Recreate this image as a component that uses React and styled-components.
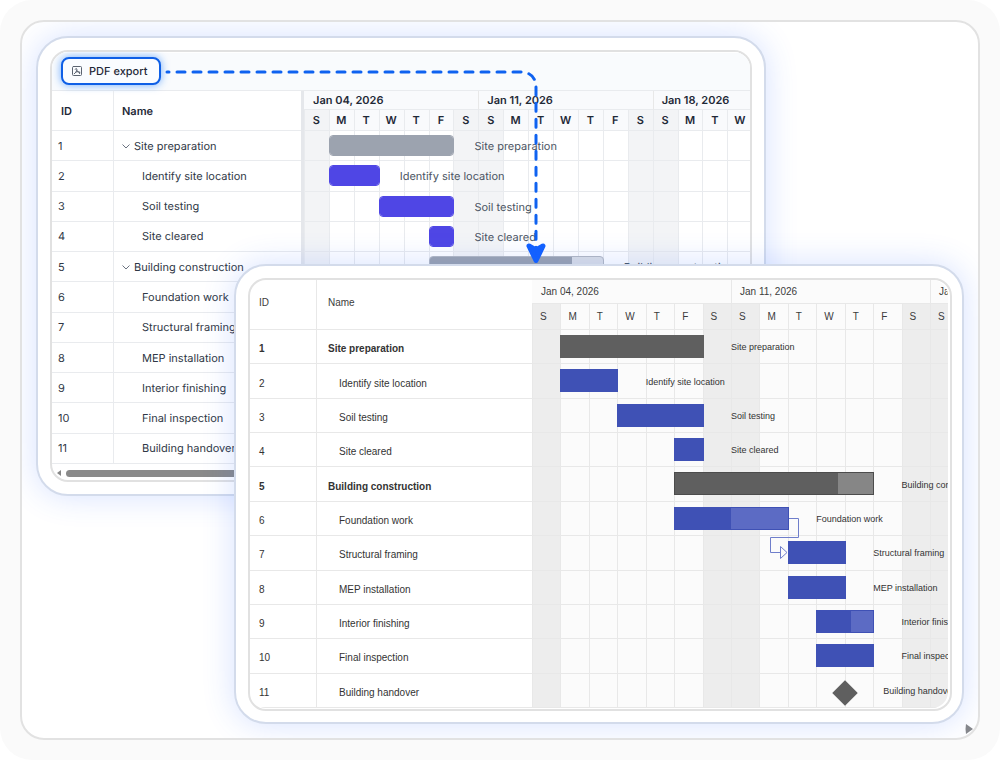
import React from 'react';
import styled, { createGlobalStyle, css } from 'styled-components';

const GlobalStyle = createGlobalStyle`
    * {
        box-sizing: border-box;
    }

    body {
        margin: 0;
        background: #ffffff;
    }
`;

const tasks = [
    { id: 1, name: 'Site preparation', group: true, start: 1, end: 6 },
    { id: 2, name: 'Identify site location', start: 1, end: 3 },
    { id: 3, name: 'Soil testing', start: 3, end: 6 },
    { id: 4, name: 'Site cleared', start: 5, end: 6 },
    { id: 5, name: 'Building construction', group: true, start: 5, end: 12, progress: 82 },
    { id: 6, name: 'Foundation work', start: 5, end: 9, progress: 50 },
    { id: 7, name: 'Structural framing', start: 9, end: 11 },
    { id: 8, name: 'MEP installation', start: 9, end: 11 },
    { id: 9, name: 'Interior finishing', start: 10, end: 12, progress: 60 },
    { id: 10, name: 'Final inspection', start: 10, end: 12 },
    { id: 11, name: 'Building handover', milestone: true, start: 11, end: 11 },
];

const weeks = ['Jan 04, 2026', 'Jan 11, 2026', 'Jan 18, 2026'];
const days = weeks.flatMap(() => ['S', 'M', 'T', 'W', 'T', 'F', 'S']);
const isWeekend = (index) => index % 7 === 0 || index % 7 === 6;

// The on-screen chart and the exported document share markup and differ only here.
const appTheme = {
    font: '"Inter", sans-serif',
    rendering: 'geometricPrecision',
    textSize: 11,
    labelSize: 11,
    headWeight: 600,
    groupWeight: 400,
    text: '#303846',
    headText: '#1f2937',
    label: '#4b5563',
    line: '#e9ebee',
    headBg: '#f9fafc',
    bodyBg: '#ffffff',
    weekend: '#f3f4f6',
    weekHeight: 19,
    dayHeight: 21,
    dayCount: 18,
    bodyHeight: 333,
    idWidth: 62,
    nameWidth: 187,
    timelineWidth: 523,
    barHeight: 21,
    barRadius: 4,
    barTop: 4,
    labelGap: 21,
    labelColumn: 1,
    rowPad: '0',
    labelPad: '0',
    headPad: '0',
    dayAlign: 'center',
    dayPad: '0',
    weekPad: 9,
    idPad: 6,
    idHeadPad: 9,
    namePad: 8,
    childPad: 28,
    group: '#9ca3af',
    groupRest: '#dcdfe5',
    groupEdge: '#b4b9c2',
    task: '#4f46e5',
    taskRest: '#8b85f0',
    taskEdge: '#4f46e5',
};

const pdfTheme = {
    font: '"Liberation Sans", Arial, sans-serif',
    rendering: 'auto',
    textSize: 10,
    labelSize: 9,
    headWeight: 400,
    groupWeight: 700,
    text: '#333333',
    headText: '#3c3c3c',
    label: '#333333',
    line: '#e8e8e8',
    headBg: '#fbfbfb',
    bodyBg: '#fbfbfb',
    weekend: '#ededed',
    weekHeight: 24,
    dayHeight: 26,
    dayCount: 15,
    bodyHeight: 378,
    idWidth: 67,
    nameWidth: 215,
    timelineWidth: 597,
    barHeight: 23,
    barRadius: 0,
    barTop: 5,
    labelGap: 0,
    labelColumn: 2,
    rowPad: '5px 0 0',
    labelPad: '0',
    headPad: '0 0 3px',
    dayAlign: 'left',
    dayPad: '0 0 0 8px',
    weekPad: 9,
    idPad: 9,
    idHeadPad: 9,
    namePad: 11,
    childPad: 22,
    group: '#5f5f5f',
    groupRest: '#868686',
    groupEdge: '#4c4c4c',
    task: '#3f51b5',
    taskRest: '#5c6bc4',
    taskEdge: '#3f51b5',
};

const Page = styled.main`
    display: flex;
    min-height: 100vh;
    padding: 20px;
    border-radius: 32px;
    background: #fafafa;
`;

const Frame = styled.section`
    position: relative;
    flex: 1;
    display: grid;
    padding: 14px;
    border: 2px solid #e2e2e2;
    border-radius: 24px;
    background: #ffffff;
    overflow: hidden;
`;

const Card = styled.article`
    grid-area: 1 / 1;
    place-self: ${({ $place }) => $place};
    width: calc(100% - 198px);
    min-width: 0;
    padding: ${({ $pad }) => $pad};
    border: 2px solid #d3dbeb;
    border-radius: 32px;
    background: #ffffff;
    box-shadow: 0 0 32px rgba(50, 105, 255, 0.2);
    z-index: ${({ $level }) => $level};
`;

const Screen = styled.div`
    padding: ${({ $pad }) => $pad};
    border: 2px solid #e1e1e1;
    border-radius: 18px;
    background: #ffffff;
`;

const ScreenContent = styled.div`
    border-radius: 16px;
    overflow: hidden;
`;

const Toolbar = styled.div`
    display: flex;
    align-items: center;
    height: 39px;
    padding: 0 0 1px 9px;
    border-top: 1px solid #ffffff;
    border-bottom: 1px solid #e9ebee;
    background: #f9fbfd;
`;

const ExportButton = styled.button`
    display: flex;
    align-items: center;
    gap: 6px;
    height: 28px;
    width: 100px;
    padding: 0 8px;
    border: 2px solid #0f5fe6;
    border-radius: 8px;
    background: #fafcff;
    box-shadow: 0 0 8px rgba(20, 120, 255, 0.6);
    color: #1f2937;
    font: 500 11px/14px "Inter", sans-serif;
    text-rendering: geometricPrecision;
    white-space: nowrap;
`;

const Chart = styled.div`
    display: flex;
    font-family: ${({ $t }) => $t.font};
    font-size: ${({ $t }) => $t.textSize}px;
    line-height: 14px;
    text-rendering: ${({ $t }) => $t.rendering};
    color: ${({ $t }) => $t.text};
`;

const Splitter = styled.div`
    flex: none;
    width: 3px;
    background: #e5e7eb;
`;

const TaskTable = styled.table`
    flex: none;
    display: grid;
    grid-template-columns: ${({ $t }) => `${$t.idWidth}px ${$t.nameWidth}px`};
    grid-template-rows: ${({ $t }) => `${$t.weekHeight + $t.dayHeight}px`} repeat(11, 1fr);
    height: ${({ $t }) => $t.weekHeight + $t.dayHeight + $t.bodyHeight}px;

    thead,
    tbody,
    tr {
        display: contents;
    }
`;

const cellStyles = css`
    display: flex;
    align-items: center;
    border-bottom: 1px solid ${({ $t }) => $t.line};
    text-align: left;
    white-space: nowrap;

    &:first-child {
        border-right: 1px solid ${({ $t }) => $t.line};
    }
`;

const HeadCell = styled.th`
    ${cellStyles};
    padding: ${({ $t }) => $t.headPad};
    padding-left: ${({ $indent }) => $indent}px;
    font-weight: ${({ $t }) => $t.headWeight};
    color: ${({ $t }) => $t.headText};
`;

const Cell = styled.td`
    ${cellStyles};
    padding: ${({ $t }) => $t.rowPad};
    padding-left: ${({ $indent }) => $indent}px;
    font-weight: ${({ $t, $group }) => ($group ? $t.groupWeight : 400)};
`;

const Chevron = styled.svg`
    width: 8px;
    height: 8px;
    margin-right: 4px;
    fill: none;
    stroke: #6b7280;
`;

const TimelineViewport = styled.div`
    flex: 1;
    min-width: 0;
    overflow: hidden;
`;

const Timeline = styled.div`
    position: relative;
    display: grid;
    width: ${({ $t }) => $t.timelineWidth}px;
    height: ${({ $t }) => $t.weekHeight + $t.dayHeight + $t.bodyHeight}px;
    grid-template-columns: repeat(21, minmax(0, 1fr));
    grid-template-rows: ${({ $t }) => `${$t.weekHeight}px ${$t.dayHeight}px`} repeat(11, minmax(0, 1fr));
`;

const Week = styled.div`
    grid-row: 1;
    grid-column: span 7;
    display: flex;
    align-items: center;
    padding-left: ${({ $t }) => $t.weekPad}px;
    border-bottom: 1px solid ${({ $t }) => $t.line};
    background: ${({ $t }) => $t.headBg};
    color: ${({ $t }) => $t.headText};
    font-weight: ${({ $t }) => $t.headWeight};

    & + & {
        padding-left: ${({ $t }) => $t.weekPad - 1}px;
        border-left: 1px solid ${({ $t }) => $t.line};
    }
`;

const DayHead = styled.div`
    grid-row: 2;
    padding: ${({ $t }) => $t.dayPad};
    border-bottom: 1px solid ${({ $t }) => $t.line};
    box-shadow: inset 1px 0 0 ${({ $t }) => $t.line};
    background: ${({ $t, $weekend }) => ($weekend ? $t.weekend : $t.headBg)};
    color: ${({ $t }) => $t.headText};
    font-weight: ${({ $t }) => $t.headWeight};
    line-height: ${({ $t }) => $t.dayHeight}px;
    text-align: ${({ $t }) => $t.dayAlign};
`;

const DayColumn = styled.div`
    grid-row: 3 / -1;
    grid-column: ${({ $day }) => $day + 1};
    border-left: 1px solid ${({ $t }) => $t.line};
    background: ${({ $t, $weekend }) => ($weekend ? $t.weekend : $t.bodyBg)};
`;

const RowLine = styled.div`
    grid-row: ${({ $row }) => $row + 3};
    grid-column: 1 / -1;
    border-bottom: 1px solid ${({ $t }) => $t.line};
`;

const Bar = styled.div`
    grid-row: ${({ $row }) => $row + 3};
    grid-column: ${({ $start, $end }) => `${$start + 1} / ${$end + 1}`};
    height: ${({ $t }) => $t.barHeight}px;
    margin: ${({ $t }) => $t.barTop}px -1px 0 0;
    border: 1px solid ${({ $t, $kind, $partial }) => ($partial ? $t[`${$kind}Edge`] : $t[$kind])};
    border-radius: ${({ $t }) => $t.barRadius}px;
    background: ${({ $t, $kind }) => $t[`${$kind}Rest`]};
    overflow: hidden;
    z-index: 1;
`;

const BarProgress = styled.div`
    height: 100%;
    background: ${({ $t, $kind }) => $t[$kind]};
`;

const Milestone = styled.div`
    grid-row: ${({ $row }) => $row + 3};
    grid-column: ${({ $start }) => $start + 1};
    align-self: center;
    width: 18px;
    height: 18px;
    margin-left: -9px;
    margin-top: 4px;
    background: ${({ $t }) => $t.group};
    transform: rotate(45deg);
    z-index: 1;
`;

const BarLabel = styled.div`
    grid-row: ${({ $row }) => $row + 3};
    grid-column: ${({ $t, $end }) => $end + $t.labelColumn};
    align-self: center;
    padding: ${({ $t }) => $t.labelPad};
    padding-left: ${({ $t, $milestone }) => $t.labelGap + ($milestone ? 10 : 0)}px;
    color: ${({ $t }) => $t.label};
    font-size: ${({ $t }) => $t.labelSize}px;
    white-space: nowrap;
    z-index: 1;
`;

const Dependency = styled.svg`
    position: absolute;
    inset: 0;
    width: 100%;
    height: 100%;
    fill: none;
    stroke: #6f7ecb;
    z-index: 1;
`;

const ScrollTrack = styled.div`
    display: flex;
    align-items: center;
    gap: 5px;
    height: 16px;
    padding: 2px 5px 0;
`;

const ScrollArrow = styled.svg`
    flex: none;
    width: 4px;
    height: 6px;
    fill: #868686;
`;

const ScrollThumb = styled.div`
    flex: 1;
    height: 7px;
    border-radius: 4px;
    background: #8a8a8a;
`;

const ExportPath = styled.svg`
    position: absolute;
    top: 0;
    left: 0;
    width: 540px;
    height: 250px;
    fill: none;
    overflow: visible;
    pointer-events: none;
    z-index: 2;
`;

const CornerMarker = styled.svg`
    position: absolute;
    right: 5px;
    bottom: 4px;
    width: 8px;
    height: 10px;
    fill: #85878c;
    z-index: 4;
`;

const PdfIcon = () => (
    <svg width="12" height="12" viewBox="0 0 12 12" fill="none" stroke="#5b6370" strokeLinecap="round" strokeLinejoin="round" aria-hidden="true">
        <rect x="1.5" y="1.5" width="9" height="9" rx="1" />
        <path d="M3.2 8.8C4.6 8 6 6.2 5.9 4.2C5.8 3.2 4.3 3.3 4.2 4.3M5.7 5.2C6 6.6 7.2 7.4 8.8 7.3M4.6 7.2C5.8 6.6 7.2 6.4 8.6 7.3V8.6" />
    </svg>
);

const GanttChart = ({ theme: t, splitter, children }) => (
    <Chart $t={t}>
        <TaskTable $t={t}>
            <thead>
                <tr>
                    <HeadCell $t={t} $indent={t.idHeadPad}>ID</HeadCell>
                    <HeadCell $t={t} $indent={t.namePad}>Name</HeadCell>
                </tr>
            </thead>
            <tbody>
                {tasks.map((task) => (
                    <tr key={task.id}>
                        <Cell $t={t} $group={task.group} $indent={t.idPad}>{task.id}</Cell>
                        <Cell $t={t} $group={task.group} $indent={task.group ? t.namePad : t.childPad}>
                            {task.group && splitter && (
                                <Chevron viewBox="0 0 8 8" aria-hidden="true">
                                    <path d="M0.5 2.5L4 6L7.5 2.5" />
                                </Chevron>
                            )}
                            {task.name}
                        </Cell>
                    </tr>
                ))}
            </tbody>
        </TaskTable>
        {splitter && <Splitter />}
        <TimelineViewport>
            <Timeline $t={t}>
                {weeks.map((week) => <Week key={week} $t={t}>{week}</Week>)}
                {days.slice(0, t.dayCount).map((day, index) => (
                    <DayHead key={index} $t={t} $weekend={isWeekend(index)}>{day}</DayHead>
                ))}
                {days.slice(0, t.dayCount).map((day, index) => (
                    <DayColumn key={index} $t={t} $day={index} $weekend={isWeekend(index)} />
                ))}
                {tasks.map((task, row) => <RowLine key={task.id} $t={t} $row={row} />)}
                {tasks.map((task, row) => {
                    const kind = task.group ? 'group' : 'task';
                    if (task.milestone) {
                        return <Milestone key={task.id} $t={t} $row={row} $start={task.start} />;
                    }
                    return (
                        <Bar key={task.id} $t={t} $row={row} $start={task.start} $end={task.end} $kind={kind} $partial={!!task.progress}>
                            <BarProgress $t={t} $kind={kind} style={{ width: `${task.progress || 100}%` }} />
                        </Bar>
                    );
                })}
                {tasks.map((task, row) => (
                    <BarLabel key={task.id} $t={t} $row={row} $end={task.end} $milestone={task.milestone}>
                        {task.name}
                    </BarLabel>
                ))}
                {children}
            </Timeline>
        </TimelineViewport>
    </Chart>
);

export default function App() {
    return (
        <>
            <GlobalStyle />
            <Page>
                <Frame>
                    <Card $place="start start" $pad="12px" $level={1}>
                        <Screen $pad="0">
                            <ScreenContent>
                                <Toolbar>
                                    <ExportButton type="button">
                                        <PdfIcon />
                                        PDF export
                                    </ExportButton>
                                </Toolbar>
                                <GanttChart theme={appTheme} splitter />
                                <ScrollTrack>
                                    <ScrollArrow viewBox="0 0 4 6" aria-hidden="true"><path d="M4 0V6L0 3Z" /></ScrollArrow>
                                    <ScrollThumb />
                                </ScrollTrack>
                            </ScreenContent>
                        </Screen>
                    </Card>
                    <ExportPath viewBox="0 0 540 250" aria-hidden="true">
                        <path
                            d="M145 50H498Q514 50 514 66V226"
                            stroke="#0f62f0"
                            strokeWidth="3"
                            strokeLinecap="round"
                            strokeDasharray="8 8"
                            strokeDashoffset="6"
                        />
                        <path d="M507 224L514 228L521 224L514 238.5Z" fill="#1261ff" stroke="#1261ff" strokeWidth="5" strokeLinejoin="round" />
                    </ExportPath>
                    <Card $place="end end" $pad="12px 10px 11px 12px" $level={3}>
                        <Screen $pad="0 2px 1px 0">
                            <ScreenContent>
                                <GanttChart theme={pdfTheme}>
                                    <Dependency aria-hidden="true">
                                        <path d="M257 238.5H266.5V257.5H238.5V272.5H248.5M248.5 266.5V278.5L255 272.5Z" />
                                    </Dependency>
                                </GanttChart>
                            </ScreenContent>
                        </Screen>
                    </Card>
                    <CornerMarker viewBox="0 0 8 10" aria-hidden="true"><path d="M1 0L8 5L1 10Q0 5 1 0Z" /></CornerMarker>
                </Frame>
            </Page>
        </>
    );
}
